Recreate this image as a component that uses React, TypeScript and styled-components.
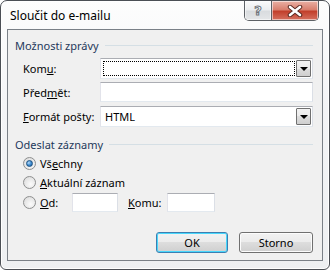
import React from "react";
import styled, { createGlobalStyle } from "styled-components";

const GlobalStyle = createGlobalStyle`
    html, body {
        margin: 0;
        padding: 0;
        background: #ffffff;
    }
    body {
        font-family: "Noto Sans", "Open Sans", sans-serif;
        font-size: 11px;
        color: #000000;
    }
`;

const Window = styled.div`
    width: 330px;
    height: 270px;
    box-sizing: border-box;
    border: 1px solid #4b4f55;
    border-radius: 7px 7px 6px 6px;
    background: linear-gradient(#fdfdfd, #f3f4f6 40%, #eef0f2);
    box-shadow: inset 0 0 0 1px #ffffff;
    padding: 0 6px 8px 6px;
    display: flex;
    flex-direction: column;
`;

const TitleBar = styled.div`
    height: 28px;
    display: flex;
    align-items: flex-start;
`;

const Title = styled.div`
    font-size: 12px;
    margin: 6px 0 0 3px;
    color: #000;
    text-shadow: 0 0 6px #ffffff;
`;

const CaptionButtons = styled.div`
    margin-left: auto;
    margin-right: 4px;
    display: flex;
    border: 1px solid #5d6166;
    border-top: none;
    border-radius: 0 0 5px 5px;
    overflow: hidden;
    height: 19px;
`;

const CaptionButton = styled.div<{ $close?: boolean }>`
    width: ${(p) => (p.$close ? 46 : 26)}px;
    height: 19px;
    display: flex;
    align-items: center;
    justify-content: center;
    border-left: ${(p) => (p.$close ? "1px solid #5d6166" : "none")};
    background: ${(p) =>
        p.$close
            ? "linear-gradient(#eab1a5, #d9806f 45%, #c2402c 55%, #d5705f)"
            : "linear-gradient(#fbfbfb, #eceef0 45%, #d9dcdf 55%, #e4e6e8)"};
    box-shadow: inset 0 0 0 1px rgba(255, 255, 255, 0.55);
`;

const HelpGlyph = styled.span`
    font-family: "DejaVu Sans", sans-serif;
    font-weight: bold;
    font-size: 13px;
    color: #ffffff;
    -webkit-text-stroke: 1px #6d7379;
    line-height: 1;
`;

const Client = styled.div`
    flex: 1;
    border: 1px solid #7a8087;
    background: #f0f0f0;
    padding: 0 9px 7px 7px;
    display: flex;
    flex-direction: column;
`;

const GroupHeader = styled.div<{ $top: number }>`
    display: flex;
    align-items: center;
    gap: 6px;
    height: 14px;
    margin-top: ${(p) => p.$top}px;
    color: #1e395b;
    white-space: nowrap;

    &::after {
        content: "";
        flex: 1;
        height: 1px;
        background: #d5dfe5;
    }
`;

const FieldRow = styled.div<{ $top: number }>`
    display: flex;
    align-items: center;
    margin-top: ${(p) => p.$top}px;
    padding-left: 8px;
`;

const Label = styled.div`
    width: 77px;
    white-space: nowrap;
`;

const Field = styled.div<{ $h: number }>`
    flex: 1;
    height: ${(p) => p.$h}px;
    box-sizing: border-box;
    border: 1px solid #abadb3;
    border-color: #abadb3 #dbdfe6 #e3e9ef #e2e3ea;
    background: #ffffff;
    display: flex;
    align-items: stretch;
    padding: 2px;
`;

const FieldText = styled.div<{ $focus?: boolean }>`
    flex: 1;
    display: flex;
    align-items: center;
    padding-left: 1px;
    border: 1px dotted ${(p) => (p.$focus ? "#000000" : "transparent")};
`;

const DropButton = styled.div`
    width: 15px;
    margin: -1px -1px -1px 1px;
    box-sizing: border-box;
    border: 1px solid #707070;
    border-radius: 1px;
    background: linear-gradient(#f2f2f2, #ebebeb 50%, #dddddd 50%, #cfcfcf);
    display: flex;
    align-items: center;
    justify-content: center;
`;

const Arrow = styled.div`
    width: 0;
    height: 0;
    border-left: 4px solid transparent;
    border-right: 4px solid transparent;
    border-top: 4px solid #000;
    margin-top: 1px;
`;

const RadioRow = styled.div<{ $top: number }>`
    display: flex;
    align-items: center;
    margin-top: ${(p) => p.$top}px;
    padding-left: 8px;
    white-space: nowrap;
`;

const RadioDot = styled.span<{ $checked?: boolean }>`
    width: 13px;
    height: 13px;
    box-sizing: border-box;
    border-radius: 50%;
    border: 1px solid #8e8f8f;
    background: radial-gradient(circle at 60% 65%, #fbfbfb, #e2e2e2 70%, #d5d5d5);
    display: inline-flex;
    align-items: center;
    justify-content: center;
    margin-right: 4px;

    &::after {
        content: "";
        display: ${(p) => (p.$checked ? "block" : "none")};
        width: 5px;
        height: 5px;
        border-radius: 50%;
        border: 1px solid #1c5180;
        background: radial-gradient(circle at 35% 35%, #b6dcfa, #3e8cd1 50%, #1d5d9b);
    }
`;

const RangeLabel = styled.span<{ $w: number; $ml?: number }>`
    width: ${(p) => p.$w}px;
    margin-left: ${(p) => p.$ml ?? 0}px;
`;

const SmallInput = styled.div<{ $w: number }>`
    width: ${(p) => p.$w}px;
    height: 19px;
    box-sizing: border-box;
    border: 1px solid #abadb3;
    border-color: #abadb3 #dbdfe6 #e3e9ef #e2e3ea;
    background: #ffffff;
`;

const ButtonRow = styled.div`
    display: flex;
    justify-content: flex-end;
    gap: 11px;
    margin-top: auto;
`;

const Button = styled.div<{ $default?: boolean }>`
    width: ${(p) => (p.$default ? 72 : 74)}px;
    height: 21px;
    box-sizing: border-box;
    border: 1px solid ${(p) => (p.$default ? "#3c7fb1" : "#707070")};
    border-radius: 3px;
    background: linear-gradient(#f2f2f2, #ebebeb 50%, #dddddd 50%, #cfcfcf);
    box-shadow: inset 0 0 0 1px ${(p) => (p.$default ? "#48d7fc" : "#fcfcfc")};
    display: flex;
    align-items: center;
    justify-content: center;
`;

const App = () => (
    <>
        <GlobalStyle />
        <Window>
            <TitleBar>
                <Title>Sloučit do e-mailu</Title>
                <CaptionButtons>
                    <CaptionButton>
                        <HelpGlyph>?</HelpGlyph>
                    </CaptionButton>
                    <CaptionButton $close>
                        <svg width="16" height="12" viewBox="0 0 16 12">
                            <path d="M3 2 L13 10 M13 2 L3 10" stroke="#5a2a22" strokeWidth="4.5" strokeLinecap="round" />
                            <path d="M3 2 L13 10 M13 2 L3 10" stroke="#ffffff" strokeWidth="2.6" strokeLinecap="round" />
                        </svg>
                    </CaptionButton>
                </CaptionButtons>
            </TitleBar>
            <Client>
                <GroupHeader $top={8}>Možnosti zprávy</GroupHeader>
                <FieldRow $top={6}>
                    <Label>
                        Kom<u>u</u>:
                    </Label>
                    <Field $h={21}>
                        <FieldText $focus />
                        <DropButton>
                            <Arrow />
                        </DropButton>
                    </Field>
                </FieldRow>
                <FieldRow $top={3}>
                    <Label>
                        Před<u>m</u>ět:
                    </Label>
                    <Field $h={20}>
                        <FieldText />
                    </Field>
                </FieldRow>
                <FieldRow $top={4}>
                    <Label>
                        <u>F</u>ormát pošty:
                    </Label>
                    <Field $h={21}>
                        <FieldText>HTML</FieldText>
                        <DropButton>
                            <Arrow />
                        </DropButton>
                    </Field>
                </FieldRow>
                <GroupHeader $top={10}>Odeslat záznamy</GroupHeader>
                <RadioRow $top={5}>
                    <RadioDot $checked />
                    Vš<u>e</u>chny
                </RadioRow>
                <RadioRow $top={4}>
                    <RadioDot />
                    <u>A</u>ktuální záznam
                </RadioRow>
                <RadioRow $top={3}>
                    <RadioDot />
                    <RangeLabel $w={32}>
                        <u>O</u>d:
                    </RangeLabel>
                    <SmallInput $w={46} />
                    <RangeLabel $w={39} $ml={10}>
                        <u>K</u>omu:
                    </RangeLabel>
                    <SmallInput $w={48} />
                </RadioRow>
                <ButtonRow>
                    <Button $default>OK</Button>
                    <Button>Storno</Button>
                </ButtonRow>
            </Client>
        </Window>
    </>
);

export default App;
